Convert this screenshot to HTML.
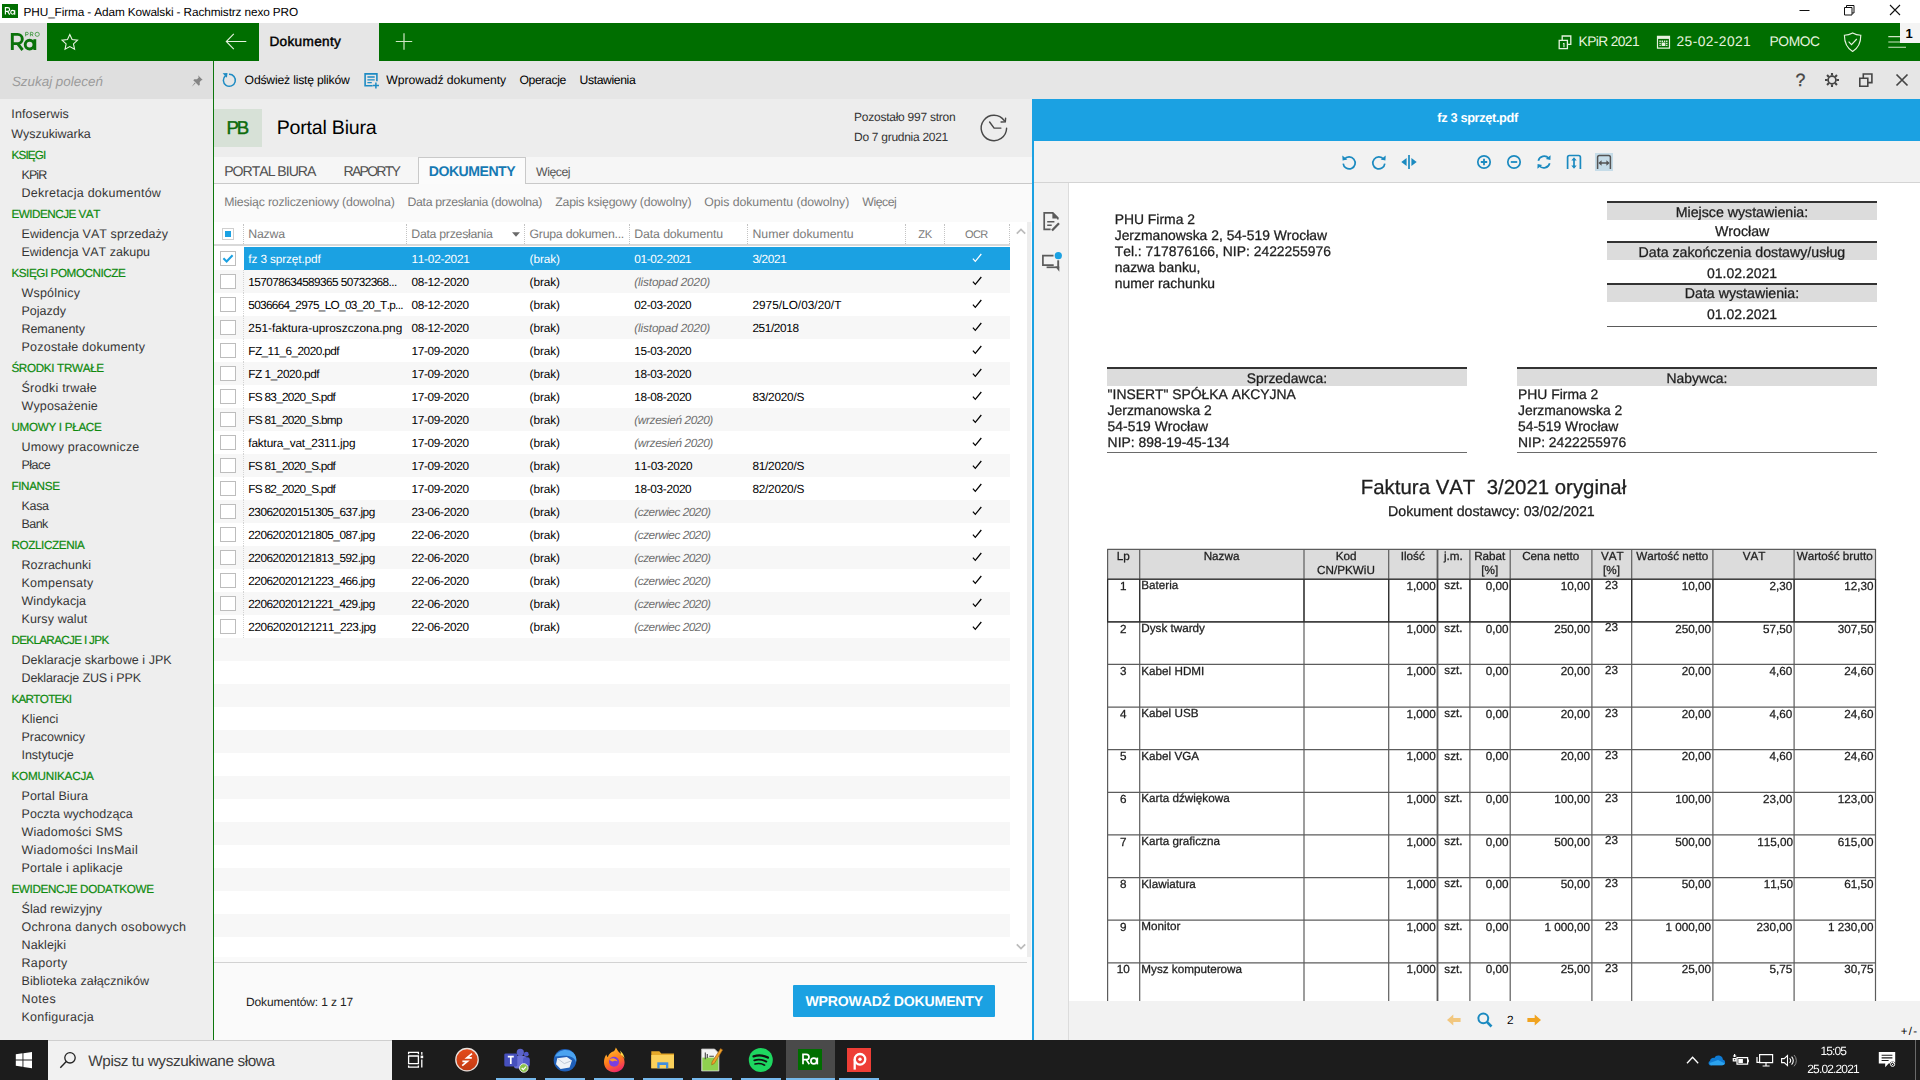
<!DOCTYPE html>
<html lang="pl">
<head>
<meta charset="utf-8">
<title>PHU_Firma - Adam Kowalski - Rachmistrz nexo PRO</title>
<style>
*{box-sizing:border-box;margin:0;padding:0}
html,body{width:1920px;height:1080px;overflow:hidden;background:#fff}
body{font-family:"Liberation Sans",sans-serif;font-size:12px;color:#000;position:relative;text-rendering:geometricPrecision}
.abs{position:absolute}
.t{position:absolute;white-space:pre;line-height:1;font-kerning:none}
svg{display:block}
</style>
</head>
<body>
<!-- main panel -->
<div>
<div class="abs" style="left:214px;top:99px;width:818px;height:941px;background:#fafafa;"></div>
<div class="abs" style="left:214px;top:99px;width:818px;height:58px;background:#ededed;"></div>
<div class="abs" style="left:214px;top:109px;width:48px;height:38px;background:#d7e1d7;"></div>
<span class="t" style="left:226.60px;top:119px;font-size:18.6px;color:#0c6b0c;letter-spacing:-2.214px;-webkit-text-stroke:0.45px #0c6b0c;">PB</span>
<span class="t" style="left:276.70px;top:119px;font-size:19.6px;color:#000;letter-spacing:-0.219px;">Portal Biura</span>
<span class="t" style="left:854.00px;top:111px;font-size:12.0px;color:#333;letter-spacing:-0.243px;">Pozostało 997 stron</span>
<span class="t" style="left:854.00px;top:131px;font-size:12.0px;color:#333;letter-spacing:-0.278px;">Do 7 grudnia 2021</span>
<svg class="abs" style="left:978px;top:112px;" width="32" height="32" viewBox="0 0 32 32"><g fill="none" stroke="#484848" stroke-width="1.450" stroke-linecap="round"><path d="M28.600 16.300A12.700 12.700 0 1 1 26.300 8.700"/><path d="M27.600 6.300l-.3 3.400-4.200.3" stroke-linejoin="miter"/><path d="M11.600 10l4.500 6.100h6.800"/></g></svg>
<div class="abs" style="left:214px;top:157px;width:818px;height:27px;background:#f6f6f6;"></div>
<div class="abs" style="left:214px;top:183px;width:818px;height:1px;background:#c9c9c9;"></div>
<div class="abs" style="left:418px;top:157px;width:108px;height:27px;background:#fbfbfb;border:1px solid #c9c9c9;border-bottom:none"></div>
<span class="t" style="left:224.20px;top:164px;font-size:14.1px;color:#505050;letter-spacing:-1.018px;">PORTAL BIURA</span>
<span class="t" style="left:343.50px;top:164px;font-size:14.1px;color:#505050;letter-spacing:-1.768px;">RAPORTY</span>
<span class="t" style="left:428.80px;top:164px;font-size:14.1px;color:#1679b3;letter-spacing:-0.508px;font-weight:bold;">DOKUMENTY</span>
<span class="t" style="left:536.00px;top:166px;font-size:12.3px;color:#555;letter-spacing:-0.481px;">Więcej</span>
<span class="t" style="left:224.20px;top:196px;font-size:12.3px;color:#7a7a7a;letter-spacing:-0.169px;">Miesiąc rozliczeniowy (dowolna)</span>
<span class="t" style="left:407.50px;top:196px;font-size:12.3px;color:#7a7a7a;letter-spacing:-0.329px;">Data przesłania (dowolna)</span>
<span class="t" style="left:555.20px;top:196px;font-size:12.3px;color:#7a7a7a;letter-spacing:-0.188px;">Zapis księgowy (dowolny)</span>
<span class="t" style="left:704.30px;top:196px;font-size:12.3px;color:#7a7a7a;letter-spacing:-0.057px;">Opis dokumentu (dowolny)</span>
<span class="t" style="left:862.30px;top:196px;font-size:12.3px;color:#7a7a7a;letter-spacing:-0.481px;">Więcej</span>
<div class="abs" style="left:214px;top:222px;width:813px;height:735px;background:#ffffff;"></div>
<div class="abs" style="left:1027px;top:222px;width:4px;height:735px;background:#ededed;"></div>
<div class="abs" style="left:214px;top:244px;width:796px;height:2px;background:#d9d9d9;"></div>
<div class="abs" style="left:222px;top:228px;width:12px;height:12px;background:#fff;border:1px solid #d0d0d0"></div>
<div class="abs" style="left:225px;top:231px;width:6px;height:6px;background:#1ba1e2;"></div>
<div class="abs" style="left:243px;top:224px;width:0;height:20px;border-left:1px dotted #c4c4c4"></div>
<div class="abs" style="left:406px;top:224px;width:0;height:20px;border-left:1px dotted #c4c4c4"></div>
<div class="abs" style="left:524px;top:224px;width:0;height:20px;border-left:1px dotted #c4c4c4"></div>
<div class="abs" style="left:628.5px;top:224px;width:0;height:20px;border-left:1px dotted #c4c4c4"></div>
<div class="abs" style="left:747px;top:224px;width:0;height:20px;border-left:1px dotted #c4c4c4"></div>
<div class="abs" style="left:905px;top:224px;width:0;height:20px;border-left:1px dotted #c4c4c4"></div>
<div class="abs" style="left:944px;top:224px;width:0;height:20px;border-left:1px dotted #c4c4c4"></div>
<div class="abs" style="left:1009px;top:224px;width:0;height:20px;border-left:1px dotted #c4c4c4"></div>
<span class="t" style="left:248.30px;top:228px;font-size:12.3px;color:#7a7a7a;letter-spacing:-0.229px;">Nazwa</span>
<span class="t" style="left:411.30px;top:228px;font-size:12.3px;color:#7a7a7a;letter-spacing:-0.276px;">Data przesłania</span>
<svg class="abs" style="left:511px;top:231px;" width="10" height="7" viewBox="0 0 10 7"><path d="M1 1.300h8L5 5.800z" fill="#6a6a6a"/></svg>
<span class="t" style="left:529.50px;top:228px;font-size:12.3px;color:#7a7a7a;letter-spacing:-0.244px;">Grupa dokumen...</span>
<span class="t" style="left:634.30px;top:228px;font-size:12.3px;color:#7a7a7a;letter-spacing:-0.112px;">Data dokumentu</span>
<span class="t" style="left:752.40px;top:228px;font-size:12.3px;color:#7a7a7a;letter-spacing:0.008px;">Numer dokumentu</span>
<span class="t" style="left:918.20px;top:230px;font-size:11.2px;color:#7a7a7a;letter-spacing:-0.312px;">ZK</span>
<span class="t" style="left:965.00px;top:230px;font-size:11.0px;color:#7a7a7a;letter-spacing:-0.572px;">OCR</span>
<svg class="abs" style="left:1015px;top:227px;" width="12" height="8" viewBox="0 0 12 8"><path d="M1.800 6.600L6 2.400l4.200 4.200" fill="none" stroke="#bcbcbc" stroke-width="1.800"/></svg>
<svg class="abs" style="left:1015px;top:943px;" width="12" height="8" viewBox="0 0 12 8"><path d="M1.800 1.400L6 5.600l4.200-4.200" fill="none" stroke="#bcbcbc" stroke-width="1.800"/></svg>
<div class="abs" style="left:244px;top:247px;width:766px;height:23px;background:#1ba1e2;"></div>
<div class="abs" style="left:220px;top:251px;width:16px;height:15px;background:#fff;border:1px solid #bdbdbd"></div>
<svg class="abs" style="left:220px;top:251px;" width="16" height="15" viewBox="0 0 16 15"><path d="M3.400 7.300l3.200 3.100 6-6.200" fill="none" stroke="#1ba1e2" stroke-width="2.100"/></svg>
<span class="t" style="left:248.30px;top:254px;font-size:11.8px;color:#fff;letter-spacing:-0.115px;">fz 3 sprzęt.pdf</span>
<span class="t" style="left:411.40px;top:254px;font-size:11.8px;color:#fff;letter-spacing:-0.210px;">11-02-2021</span>
<span class="t" style="left:529.60px;top:254px;font-size:11.8px;color:#fff;letter-spacing:-0.103px;">(brak)</span>
<span class="t" style="left:634.30px;top:254px;font-size:11.8px;color:#fff;letter-spacing:-0.329px;">01-02-2021</span>
<span class="t" style="left:752.40px;top:254px;font-size:11.8px;color:#fff;letter-spacing:-0.338px;">3/2021</span>
<svg class="abs" style="left:971px;top:252px;" width="12" height="12" viewBox="0 0 12 12"><path d="M1.900 6.600l2.400 2.700L10.300 2" fill="none" stroke="#fff" stroke-width="1.250"/></svg>
<div class="abs" style="left:214px;top:270px;width:796px;height:23px;background:#f7f7f7;"></div>
<div class="abs" style="left:220px;top:274px;width:16px;height:15px;background:#fff;border:1px solid #bdbdbd"></div>
<div class="abs" style="left:243px;top:270px;width:0;height:23px;border-left:1px dotted #d4d4d4"></div>
<span class="t" style="left:248.30px;top:277px;font-size:11.8px;color:#000;letter-spacing:-0.579px;">157078634589365 50732368...</span>
<span class="t" style="left:411.40px;top:277px;font-size:11.8px;color:#000;letter-spacing:-0.307px;">08-12-2020</span>
<span class="t" style="left:529.60px;top:277px;font-size:11.8px;color:#000;letter-spacing:-0.103px;">(brak)</span>
<span class="t" style="left:634.30px;top:277px;font-size:11.8px;color:#6e6e6e;letter-spacing:-0.147px;font-style:italic;">(listopad 2020)</span>
<svg class="abs" style="left:971px;top:275px;" width="12" height="12" viewBox="0 0 12 12"><path d="M1.900 6.600l2.400 2.700L10.300 2" fill="none" stroke="#000" stroke-width="1.250"/></svg>
<div class="abs" style="left:220px;top:297px;width:16px;height:15px;background:#fff;border:1px solid #bdbdbd"></div>
<div class="abs" style="left:243px;top:293px;width:0;height:23px;border-left:1px dotted #d4d4d4"></div>
<span class="t" style="left:248.30px;top:300px;font-size:11.8px;color:#000;letter-spacing:-0.688px;">5036664_2975_LO_03_20_T.p...</span>
<span class="t" style="left:411.40px;top:300px;font-size:11.8px;color:#000;letter-spacing:-0.307px;">08-12-2020</span>
<span class="t" style="left:529.60px;top:300px;font-size:11.8px;color:#000;letter-spacing:-0.103px;">(brak)</span>
<span class="t" style="left:634.30px;top:300px;font-size:11.8px;color:#000;letter-spacing:-0.329px;">02-03-2020</span>
<span class="t" style="left:752.40px;top:300px;font-size:11.8px;color:#000;letter-spacing:0.031px;">2975/LO/03/20/T</span>
<svg class="abs" style="left:971px;top:298px;" width="12" height="12" viewBox="0 0 12 12"><path d="M1.900 6.600l2.400 2.700L10.300 2" fill="none" stroke="#000" stroke-width="1.250"/></svg>
<div class="abs" style="left:214px;top:316px;width:796px;height:23px;background:#f7f7f7;"></div>
<div class="abs" style="left:220px;top:320px;width:16px;height:15px;background:#fff;border:1px solid #bdbdbd"></div>
<div class="abs" style="left:243px;top:316px;width:0;height:23px;border-left:1px dotted #d4d4d4"></div>
<span class="t" style="left:248.30px;top:323px;font-size:11.8px;color:#000;letter-spacing:0.019px;">251-faktura-uproszczona.png</span>
<span class="t" style="left:411.40px;top:323px;font-size:11.8px;color:#000;letter-spacing:-0.307px;">08-12-2020</span>
<span class="t" style="left:529.60px;top:323px;font-size:11.8px;color:#000;letter-spacing:-0.103px;">(brak)</span>
<span class="t" style="left:634.30px;top:323px;font-size:11.8px;color:#6e6e6e;letter-spacing:-0.147px;font-style:italic;">(listopad 2020)</span>
<span class="t" style="left:752.40px;top:323px;font-size:11.8px;color:#000;letter-spacing:-0.374px;">251/2018</span>
<svg class="abs" style="left:971px;top:321px;" width="12" height="12" viewBox="0 0 12 12"><path d="M1.900 6.600l2.400 2.700L10.300 2" fill="none" stroke="#000" stroke-width="1.250"/></svg>
<div class="abs" style="left:220px;top:343px;width:16px;height:15px;background:#fff;border:1px solid #bdbdbd"></div>
<div class="abs" style="left:243px;top:339px;width:0;height:23px;border-left:1px dotted #d4d4d4"></div>
<span class="t" style="left:248.30px;top:346px;font-size:11.8px;color:#000;letter-spacing:-0.557px;">FZ_11_6_2020.pdf</span>
<span class="t" style="left:411.40px;top:346px;font-size:11.8px;color:#000;letter-spacing:-0.307px;">17-09-2020</span>
<span class="t" style="left:529.60px;top:346px;font-size:11.8px;color:#000;letter-spacing:-0.103px;">(brak)</span>
<span class="t" style="left:634.30px;top:346px;font-size:11.8px;color:#000;letter-spacing:-0.329px;">15-03-2020</span>
<svg class="abs" style="left:971px;top:344px;" width="12" height="12" viewBox="0 0 12 12"><path d="M1.900 6.600l2.400 2.700L10.300 2" fill="none" stroke="#000" stroke-width="1.250"/></svg>
<div class="abs" style="left:214px;top:362px;width:796px;height:23px;background:#f7f7f7;"></div>
<div class="abs" style="left:220px;top:366px;width:16px;height:15px;background:#fff;border:1px solid #bdbdbd"></div>
<div class="abs" style="left:243px;top:362px;width:0;height:23px;border-left:1px dotted #d4d4d4"></div>
<span class="t" style="left:248.30px;top:369px;font-size:11.8px;color:#000;letter-spacing:-0.454px;">FZ 1_2020.pdf</span>
<span class="t" style="left:411.40px;top:369px;font-size:11.8px;color:#000;letter-spacing:-0.307px;">17-09-2020</span>
<span class="t" style="left:529.60px;top:369px;font-size:11.8px;color:#000;letter-spacing:-0.103px;">(brak)</span>
<span class="t" style="left:634.30px;top:369px;font-size:11.8px;color:#000;letter-spacing:-0.329px;">18-03-2020</span>
<svg class="abs" style="left:971px;top:367px;" width="12" height="12" viewBox="0 0 12 12"><path d="M1.900 6.600l2.400 2.700L10.300 2" fill="none" stroke="#000" stroke-width="1.250"/></svg>
<div class="abs" style="left:220px;top:389px;width:16px;height:15px;background:#fff;border:1px solid #bdbdbd"></div>
<div class="abs" style="left:243px;top:385px;width:0;height:23px;border-left:1px dotted #d4d4d4"></div>
<span class="t" style="left:248.30px;top:392px;font-size:11.8px;color:#000;letter-spacing:-0.728px;">FS 83_2020_S.pdf</span>
<span class="t" style="left:411.40px;top:392px;font-size:11.8px;color:#000;letter-spacing:-0.307px;">17-09-2020</span>
<span class="t" style="left:529.60px;top:392px;font-size:11.8px;color:#000;letter-spacing:-0.103px;">(brak)</span>
<span class="t" style="left:634.30px;top:392px;font-size:11.8px;color:#000;letter-spacing:-0.329px;">18-08-2020</span>
<span class="t" style="left:752.40px;top:392px;font-size:11.8px;color:#000;letter-spacing:-0.226px;">83/2020/S</span>
<svg class="abs" style="left:971px;top:390px;" width="12" height="12" viewBox="0 0 12 12"><path d="M1.900 6.600l2.400 2.700L10.300 2" fill="none" stroke="#000" stroke-width="1.250"/></svg>
<div class="abs" style="left:214px;top:408px;width:796px;height:23px;background:#f7f7f7;"></div>
<div class="abs" style="left:220px;top:412px;width:16px;height:15px;background:#fff;border:1px solid #bdbdbd"></div>
<div class="abs" style="left:243px;top:408px;width:0;height:23px;border-left:1px dotted #d4d4d4"></div>
<span class="t" style="left:248.30px;top:415px;font-size:11.8px;color:#000;letter-spacing:-0.718px;">FS 81_2020_S.bmp</span>
<span class="t" style="left:411.40px;top:415px;font-size:11.8px;color:#000;letter-spacing:-0.307px;">17-09-2020</span>
<span class="t" style="left:529.60px;top:415px;font-size:11.8px;color:#000;letter-spacing:-0.103px;">(brak)</span>
<span class="t" style="left:634.30px;top:415px;font-size:11.8px;color:#6e6e6e;letter-spacing:-0.354px;font-style:italic;">(wrzesień 2020)</span>
<svg class="abs" style="left:971px;top:413px;" width="12" height="12" viewBox="0 0 12 12"><path d="M1.900 6.600l2.400 2.700L10.300 2" fill="none" stroke="#000" stroke-width="1.250"/></svg>
<div class="abs" style="left:220px;top:435px;width:16px;height:15px;background:#fff;border:1px solid #bdbdbd"></div>
<div class="abs" style="left:243px;top:431px;width:0;height:23px;border-left:1px dotted #d4d4d4"></div>
<span class="t" style="left:248.30px;top:438px;font-size:11.8px;color:#000;letter-spacing:-0.160px;">faktura_vat_2311.jpg</span>
<span class="t" style="left:411.40px;top:438px;font-size:11.8px;color:#000;letter-spacing:-0.307px;">17-09-2020</span>
<span class="t" style="left:529.60px;top:438px;font-size:11.8px;color:#000;letter-spacing:-0.103px;">(brak)</span>
<span class="t" style="left:634.30px;top:438px;font-size:11.8px;color:#6e6e6e;letter-spacing:-0.354px;font-style:italic;">(wrzesień 2020)</span>
<svg class="abs" style="left:971px;top:436px;" width="12" height="12" viewBox="0 0 12 12"><path d="M1.900 6.600l2.400 2.700L10.300 2" fill="none" stroke="#000" stroke-width="1.250"/></svg>
<div class="abs" style="left:214px;top:454px;width:796px;height:23px;background:#f7f7f7;"></div>
<div class="abs" style="left:220px;top:458px;width:16px;height:15px;background:#fff;border:1px solid #bdbdbd"></div>
<div class="abs" style="left:243px;top:454px;width:0;height:23px;border-left:1px dotted #d4d4d4"></div>
<span class="t" style="left:248.30px;top:461px;font-size:11.8px;color:#000;letter-spacing:-0.728px;">FS 81_2020_S.pdf</span>
<span class="t" style="left:411.40px;top:461px;font-size:11.8px;color:#000;letter-spacing:-0.307px;">17-09-2020</span>
<span class="t" style="left:529.60px;top:461px;font-size:11.8px;color:#000;letter-spacing:-0.103px;">(brak)</span>
<span class="t" style="left:634.30px;top:461px;font-size:11.8px;color:#000;letter-spacing:-0.232px;">11-03-2020</span>
<span class="t" style="left:752.40px;top:461px;font-size:11.8px;color:#000;letter-spacing:-0.226px;">81/2020/S</span>
<svg class="abs" style="left:971px;top:459px;" width="12" height="12" viewBox="0 0 12 12"><path d="M1.900 6.600l2.400 2.700L10.300 2" fill="none" stroke="#000" stroke-width="1.250"/></svg>
<div class="abs" style="left:220px;top:481px;width:16px;height:15px;background:#fff;border:1px solid #bdbdbd"></div>
<div class="abs" style="left:243px;top:477px;width:0;height:23px;border-left:1px dotted #d4d4d4"></div>
<span class="t" style="left:248.30px;top:484px;font-size:11.8px;color:#000;letter-spacing:-0.728px;">FS 82_2020_S.pdf</span>
<span class="t" style="left:411.40px;top:484px;font-size:11.8px;color:#000;letter-spacing:-0.307px;">17-09-2020</span>
<span class="t" style="left:529.60px;top:484px;font-size:11.8px;color:#000;letter-spacing:-0.103px;">(brak)</span>
<span class="t" style="left:634.30px;top:484px;font-size:11.8px;color:#000;letter-spacing:-0.329px;">18-03-2020</span>
<span class="t" style="left:752.40px;top:484px;font-size:11.8px;color:#000;letter-spacing:-0.226px;">82/2020/S</span>
<svg class="abs" style="left:971px;top:482px;" width="12" height="12" viewBox="0 0 12 12"><path d="M1.900 6.600l2.400 2.700L10.300 2" fill="none" stroke="#000" stroke-width="1.250"/></svg>
<div class="abs" style="left:214px;top:500px;width:796px;height:23px;background:#f7f7f7;"></div>
<div class="abs" style="left:220px;top:504px;width:16px;height:15px;background:#fff;border:1px solid #bdbdbd"></div>
<div class="abs" style="left:243px;top:500px;width:0;height:23px;border-left:1px dotted #d4d4d4"></div>
<span class="t" style="left:248.30px;top:507px;font-size:11.8px;color:#000;letter-spacing:-0.484px;">23062020151305_637.jpg</span>
<span class="t" style="left:411.40px;top:507px;font-size:11.8px;color:#000;letter-spacing:-0.307px;">23-06-2020</span>
<span class="t" style="left:529.60px;top:507px;font-size:11.8px;color:#000;letter-spacing:-0.103px;">(brak)</span>
<span class="t" style="left:634.30px;top:507px;font-size:11.8px;color:#6e6e6e;letter-spacing:-0.471px;font-style:italic;">(czerwiec 2020)</span>
<svg class="abs" style="left:971px;top:505px;" width="12" height="12" viewBox="0 0 12 12"><path d="M1.900 6.600l2.400 2.700L10.300 2" fill="none" stroke="#000" stroke-width="1.250"/></svg>
<div class="abs" style="left:220px;top:527px;width:16px;height:15px;background:#fff;border:1px solid #bdbdbd"></div>
<div class="abs" style="left:243px;top:523px;width:0;height:23px;border-left:1px dotted #d4d4d4"></div>
<span class="t" style="left:248.30px;top:530px;font-size:11.8px;color:#000;letter-spacing:-0.484px;">22062020121805_087.jpg</span>
<span class="t" style="left:411.40px;top:530px;font-size:11.8px;color:#000;letter-spacing:-0.307px;">22-06-2020</span>
<span class="t" style="left:529.60px;top:530px;font-size:11.8px;color:#000;letter-spacing:-0.103px;">(brak)</span>
<span class="t" style="left:634.30px;top:530px;font-size:11.8px;color:#6e6e6e;letter-spacing:-0.471px;font-style:italic;">(czerwiec 2020)</span>
<svg class="abs" style="left:971px;top:528px;" width="12" height="12" viewBox="0 0 12 12"><path d="M1.900 6.600l2.400 2.700L10.300 2" fill="none" stroke="#000" stroke-width="1.250"/></svg>
<div class="abs" style="left:214px;top:546px;width:796px;height:23px;background:#f7f7f7;"></div>
<div class="abs" style="left:220px;top:550px;width:16px;height:15px;background:#fff;border:1px solid #bdbdbd"></div>
<div class="abs" style="left:243px;top:546px;width:0;height:23px;border-left:1px dotted #d4d4d4"></div>
<span class="t" style="left:248.30px;top:553px;font-size:11.8px;color:#000;letter-spacing:-0.484px;">22062020121813_592.jpg</span>
<span class="t" style="left:411.40px;top:553px;font-size:11.8px;color:#000;letter-spacing:-0.307px;">22-06-2020</span>
<span class="t" style="left:529.60px;top:553px;font-size:11.8px;color:#000;letter-spacing:-0.103px;">(brak)</span>
<span class="t" style="left:634.30px;top:553px;font-size:11.8px;color:#6e6e6e;letter-spacing:-0.471px;font-style:italic;">(czerwiec 2020)</span>
<svg class="abs" style="left:971px;top:551px;" width="12" height="12" viewBox="0 0 12 12"><path d="M1.900 6.600l2.400 2.700L10.300 2" fill="none" stroke="#000" stroke-width="1.250"/></svg>
<div class="abs" style="left:220px;top:573px;width:16px;height:15px;background:#fff;border:1px solid #bdbdbd"></div>
<div class="abs" style="left:243px;top:569px;width:0;height:23px;border-left:1px dotted #d4d4d4"></div>
<span class="t" style="left:248.30px;top:576px;font-size:11.8px;color:#000;letter-spacing:-0.484px;">22062020121223_466.jpg</span>
<span class="t" style="left:411.40px;top:576px;font-size:11.8px;color:#000;letter-spacing:-0.307px;">22-06-2020</span>
<span class="t" style="left:529.60px;top:576px;font-size:11.8px;color:#000;letter-spacing:-0.103px;">(brak)</span>
<span class="t" style="left:634.30px;top:576px;font-size:11.8px;color:#6e6e6e;letter-spacing:-0.471px;font-style:italic;">(czerwiec 2020)</span>
<svg class="abs" style="left:971px;top:574px;" width="12" height="12" viewBox="0 0 12 12"><path d="M1.900 6.600l2.400 2.700L10.300 2" fill="none" stroke="#000" stroke-width="1.250"/></svg>
<div class="abs" style="left:214px;top:592px;width:796px;height:23px;background:#f7f7f7;"></div>
<div class="abs" style="left:220px;top:596px;width:16px;height:15px;background:#fff;border:1px solid #bdbdbd"></div>
<div class="abs" style="left:243px;top:592px;width:0;height:23px;border-left:1px dotted #d4d4d4"></div>
<span class="t" style="left:248.30px;top:599px;font-size:11.8px;color:#000;letter-spacing:-0.484px;">22062020121221_429.jpg</span>
<span class="t" style="left:411.40px;top:599px;font-size:11.8px;color:#000;letter-spacing:-0.307px;">22-06-2020</span>
<span class="t" style="left:529.60px;top:599px;font-size:11.8px;color:#000;letter-spacing:-0.103px;">(brak)</span>
<span class="t" style="left:634.30px;top:599px;font-size:11.8px;color:#6e6e6e;letter-spacing:-0.471px;font-style:italic;">(czerwiec 2020)</span>
<svg class="abs" style="left:971px;top:597px;" width="12" height="12" viewBox="0 0 12 12"><path d="M1.900 6.600l2.400 2.700L10.300 2" fill="none" stroke="#000" stroke-width="1.250"/></svg>
<div class="abs" style="left:220px;top:619px;width:16px;height:15px;background:#fff;border:1px solid #bdbdbd"></div>
<div class="abs" style="left:243px;top:615px;width:0;height:23px;border-left:1px dotted #d4d4d4"></div>
<span class="t" style="left:248.30px;top:622px;font-size:11.8px;color:#000;letter-spacing:-0.442px;">22062020121211_223.jpg</span>
<span class="t" style="left:411.40px;top:622px;font-size:11.8px;color:#000;letter-spacing:-0.307px;">22-06-2020</span>
<span class="t" style="left:529.60px;top:622px;font-size:11.8px;color:#000;letter-spacing:-0.103px;">(brak)</span>
<span class="t" style="left:634.30px;top:622px;font-size:11.8px;color:#6e6e6e;letter-spacing:-0.471px;font-style:italic;">(czerwiec 2020)</span>
<svg class="abs" style="left:971px;top:620px;" width="12" height="12" viewBox="0 0 12 12"><path d="M1.900 6.600l2.400 2.700L10.300 2" fill="none" stroke="#000" stroke-width="1.250"/></svg>
<div class="abs" style="left:214px;top:638px;width:796px;height:23px;background:#f7f7f7;"></div>
<div class="abs" style="left:214px;top:684px;width:796px;height:23px;background:#f7f7f7;"></div>
<div class="abs" style="left:214px;top:730px;width:796px;height:23px;background:#f7f7f7;"></div>
<div class="abs" style="left:214px;top:776px;width:796px;height:23px;background:#f7f7f7;"></div>
<div class="abs" style="left:214px;top:822px;width:796px;height:23px;background:#f7f7f7;"></div>
<div class="abs" style="left:214px;top:868px;width:796px;height:23px;background:#f7f7f7;"></div>
<div class="abs" style="left:214px;top:914px;width:796px;height:23px;background:#f7f7f7;"></div>
<div class="abs" style="left:214px;top:962px;width:813px;height:1px;background:#d2d2d2;"></div>
<span class="t" style="left:246.00px;top:996px;font-size:12.0px;color:#222;letter-spacing:-0.123px;">Dokumentów: 1 z 17</span>
<div class="abs" style="left:793px;top:985px;width:202px;height:32px;background:#1ba1e2;border-radius:1px"></div>
<span class="t" style="left:805.50px;top:994px;font-size:14.1px;color:#fff;letter-spacing:-0.186px;font-weight:bold;">WPROWADŹ DOKUMENTY</span>
</div>
<!-- right pane / pdf preview -->
<div>
<div class="abs" style="left:1034px;top:99px;width:886px;height:941px;background:#f2f2f2;"></div>
<div class="abs" style="left:1032px;top:99px;width:888px;height:42px;background:#1ba1e2;"></div>
<span class="t" style="left:1437.30px;top:112px;font-size:12.8px;color:#fff;letter-spacing:-0.361px;font-weight:bold;">fz 3 sprzęt.pdf</span>
<div class="abs" style="left:1034px;top:182px;width:886px;height:1px;background:#d4d4d4;"></div>
<div class="abs" style="left:1068px;top:183px;width:1px;height:857px;background:#dcdcdc;"></div>
<div class="abs" style="left:1032px;top:99px;width:2px;height:941px;background:#1ba1e2;"></div>
<svg class="abs" style="left:1339.7px;top:153px;" width="18" height="18" viewBox="0 0 18 18"><path d="M4.300 6.400A6 6 0 1 1 3.200 10.600" fill="none" stroke="#1b8ac0" stroke-width="1.700"/><path d="M2.300 2.600l.3 5 4.700-1.200z" fill="#1b8ac0"/></svg>
<svg class="abs" style="left:1370px;top:153px;" width="18" height="18" viewBox="0 0 18 18"><path d="M13.700 6.400A6 6 0 1 0 14.800 10.600" fill="none" stroke="#1b8ac0" stroke-width="1.700"/><path d="M15.700 2.600l-.3 5-4.700-1.200z" fill="#1b8ac0"/></svg>
<svg class="abs" style="left:1400px;top:153px;" width="18" height="18" viewBox="0 0 18 18"><path d="M9 2v14" fill="none" stroke="#1b8ac0" stroke-width="1.700"/><path d="M6.600 5v8L1.300 9zM11.400 5v8l5.300-4z" fill="#1b8ac0"/></svg>
<svg class="abs" style="left:1475px;top:153px;" width="18" height="18" viewBox="0 0 18 18"><circle cx="9" cy="9" r="6.200" fill="none" stroke="#1b8ac0" stroke-width="1.700"/><path d="M5.800 9h6.400M9 5.800v6.400" fill="none" stroke="#1b8ac0" stroke-width="1.800"/></svg>
<svg class="abs" style="left:1505px;top:153px;" width="18" height="18" viewBox="0 0 18 18"><circle cx="9" cy="9" r="6.200" fill="none" stroke="#1b8ac0" stroke-width="1.700"/><path d="M5.800 9h6.400" fill="none" stroke="#1b8ac0" stroke-width="1.800"/></svg>
<svg class="abs" style="left:1535px;top:153px;" width="18" height="18" viewBox="0 0 18 18"><path d="M3.300 7.800A6 6 0 0 1 13.700 5.300M14.700 10.200A6 6 0 0 1 4.300 12.700" fill="none" stroke="#1b8ac0" stroke-width="1.700"/><path d="M15.600 2.300l-.2 4.800-4.600-1.100zM2.400 15.700l.2-4.800 4.600 1.100z" fill="#1b8ac0"/></svg>
<svg class="abs" style="left:1565px;top:153px;" width="18" height="18" viewBox="0 0 18 18"><path d="M2.600 16V4.300q0-1.800 1.800-1.800h9.200q1.800 0 1.800 1.800V16" fill="none" stroke="#1b8ac0" stroke-width="1.700"/><path d="M9 6.500v7" fill="none" stroke="#1b8ac0" stroke-width="1.700"/><path d="M6.300 7.600L9 4.300l2.700 3.300zM6.300 12.400L9 15.700l2.700-3.300z" fill="#1b8ac0"/></svg>
<div class="abs" style="left:1595px;top:153px;width:18px;height:18px;background:#c6dce8;"></div>
<svg class="abs" style="left:1595px;top:153px;" width="18" height="18" viewBox="0 0 18 18"><path d="M2.600 16V4.300q0-1.800 1.800-1.800h9.200q1.800 0 1.800 1.800V16" fill="none" stroke="#555" stroke-width="1.500"/><path d="M5.500 10h7" fill="none" stroke="#555" stroke-width="1.500"/><path d="M6.600 7.300L3.300 10l3.300 2.700zM11.400 7.300l3.300 2.700-3.300 2.700z" fill="#555"/></svg>
<svg class="abs" style="left:1042px;top:210px;" width="20" height="22" viewBox="0 0 20 22"><g fill="none" stroke="#5b5b5b"><path d="M8.600 19.400H2.200V2.900h8.600l5 5v1.700" stroke-width="1.700"/><path d="M5.200 11.700h7.200M5.200 15.300h4.500" stroke-width="1.600"/><path d="M17 13.200l-7 7.300" stroke-width="2.300"/></g><path d="M10.400 2.600l5.900 5.900h-5.900z" fill="#5b5b5b"/></svg>
<svg class="abs" style="left:1040px;top:250px;" width="24" height="24" viewBox="0 0 24 24"><g fill="none" stroke="#5b5b5b" stroke-width="1.700"><path d="M13.500 5.600H2.900v9.500h10.800"/><path d="M6.600 17.300h11.200"/><path d="M18.200 10.300v7.800" stroke-width="1.900"/></g><path d="M15.300 16.500h4v5.300z" fill="#5b5b5b"/><circle cx="18.300" cy="5.700" r="3.600" fill="#1ba1e2"/></svg>
<div class="abs" style="left:1069px;top:183px;width:851px;height:818px;background:#ffffff;"></div>
<div class="abs" style="left:0;top:0;width:1920px;height:1001px;overflow:hidden;filter:blur(0.4px);-webkit-text-stroke:0.28px #1e1e1e"><span class="t" style="left:1114.70px;top:213px;font-size:13.9px;color:#1e1e1e;">PHU Firma 2</span>
<span class="t" style="left:1114.70px;top:229px;font-size:13.9px;color:#1e1e1e;">Jerzmanowska 2, 54-519 Wrocław</span>
<span class="t" style="left:1114.70px;top:245px;font-size:13.9px;color:#1e1e1e;">Tel.: 717876166, NIP: 2422255976</span>
<span class="t" style="left:1114.70px;top:261px;font-size:13.9px;color:#1e1e1e;">nazwa banku,</span>
<span class="t" style="left:1114.70px;top:277px;font-size:13.9px;color:#1e1e1e;">numer rachunku</span>
<div class="abs" style="left:1607px;top:201px;width:270px;height:2px;background:#333;"></div>
<div class="abs" style="left:1607px;top:203px;width:270px;height:17px;background:#dcdcdc;"></div>
<span class="t" style="left:1675.71px;top:206px;font-size:14.2px;color:#1e1e1e;">Miejsce wystawienia:</span>
<span class="t" style="left:1714.91px;top:225px;font-size:14.2px;color:#1e1e1e;">Wrocław</span>
<div class="abs" style="left:1607px;top:241px;width:270px;height:2px;background:#333;"></div>
<div class="abs" style="left:1607px;top:243px;width:270px;height:17px;background:#dcdcdc;"></div>
<span class="t" style="left:1638.59px;top:246px;font-size:14.2px;color:#1e1e1e;">Data zakończenia dostawy/usług</span>
<span class="t" style="left:1706.96px;top:266px;font-size:14.0px;color:#1e1e1e;">01.02.2021</span>
<div class="abs" style="left:1607px;top:283px;width:270px;height:2px;background:#333;"></div>
<div class="abs" style="left:1607px;top:285px;width:270px;height:17px;background:#dcdcdc;"></div>
<span class="t" style="left:1684.78px;top:287px;font-size:14.2px;color:#1e1e1e;">Data wystawienia:</span>
<span class="t" style="left:1706.96px;top:307px;font-size:14.0px;color:#1e1e1e;">01.02.2021</span>
<div class="abs" style="left:1607px;top:326px;width:270px;height:1px;background:#5a5a5a;"></div>
<div class="abs" style="left:1107px;top:367px;width:360px;height:2px;background:#333;"></div>
<div class="abs" style="left:1107px;top:369px;width:360px;height:17px;background:#dcdcdc;"></div>
<span class="t" style="left:1246.82px;top:372px;font-size:13.9px;color:#1e1e1e;">Sprzedawca:</span>
<span class="t" style="left:1107.60px;top:388px;font-size:13.9px;color:#1e1e1e;">"INSERT" SPÓŁKA AKCYJNA</span>
<span class="t" style="left:1107.60px;top:404px;font-size:13.9px;color:#1e1e1e;">Jerzmanowska 2</span>
<span class="t" style="left:1107.60px;top:420px;font-size:13.9px;color:#1e1e1e;">54-519 Wrocław</span>
<span class="t" style="left:1107.60px;top:436px;font-size:13.9px;color:#1e1e1e;">NIP: 898-19-45-134</span>
<div class="abs" style="left:1107px;top:452px;width:360px;height:1px;background:#6a6a6a;"></div>
<div class="abs" style="left:1517px;top:367px;width:360px;height:2px;background:#333;"></div>
<div class="abs" style="left:1517px;top:369px;width:360px;height:17px;background:#dcdcdc;"></div>
<span class="t" style="left:1666.48px;top:372px;font-size:13.9px;color:#1e1e1e;">Nabywca:</span>
<span class="t" style="left:1518.00px;top:388px;font-size:13.9px;color:#1e1e1e;">PHU Firma 2</span>
<span class="t" style="left:1518.00px;top:404px;font-size:13.9px;color:#1e1e1e;">Jerzmanowska 2</span>
<span class="t" style="left:1518.00px;top:420px;font-size:13.9px;color:#1e1e1e;">54-519 Wrocław</span>
<span class="t" style="left:1518.00px;top:436px;font-size:13.9px;color:#1e1e1e;">NIP: 2422255976</span>
<div class="abs" style="left:1517px;top:452px;width:360px;height:1px;background:#6a6a6a;"></div>
<span class="t" style="left:1360.80px;top:478px;font-size:20.4px;color:#1e1e1e;letter-spacing:0.007px;">Faktura VAT  3/2021 oryginał</span>
<span class="t" style="left:1388.09px;top:505px;font-size:14.2px;color:#1e1e1e;">Dokument dostawcy: 03/02/2021</span>
<div class="abs" style="left:1107px;top:549px;width:768.5px;height:30px;background:#dcdcdc;"></div>
<svg class="abs" style="left:1107px;top:549px;overflow:visible;" width="770" height="452" viewBox="0 0 770 452"><g fill="none" stroke="#5c5c5c" stroke-width="1.200"><path d="M0.3 0.40H768.7"/><path d="M0.3 30.20H768.7"/><path d="M0.3 72.82H768.7"/><path d="M0.3 115.44H768.7"/><path d="M0.3 158.06H768.7"/><path d="M0.3 200.68H768.7"/><path d="M0.3 243.30H768.7"/><path d="M0.3 285.92H768.7"/><path d="M0.3 328.54H768.7"/><path d="M0.3 371.16H768.7"/><path d="M0.3 413.78H768.7"/><path d="M0.60 -0.1V452.0"/><path d="M32.70 -0.1V452.0"/><path d="M197.00 -0.1V452.0"/><path d="M281.70 -0.1V452.0"/><path d="M330.50 -0.1V452.0" stroke-width="1.8"/><path d="M362.90 -0.1V452.0"/><path d="M403.20 -0.1V452.0"/><path d="M484.90 -0.1V452.0"/><path d="M524.70 -0.1V452.0"/><path d="M605.90 -0.1V452.0"/><path d="M687.10 -0.1V452.0"/><path d="M768.50 -0.1V452.0"/></g><g fill="none" stroke="#2c2c2c" stroke-width="1.150"><path d="M-0.0 30.20H769.1"/><path d="M-0.0 72.82H769.1"/><path d="M0.60 30.2V72.8"/><path d="M32.70 30.2V72.8"/><path d="M197.00 30.2V72.8"/><path d="M281.70 30.2V72.8"/><path d="M330.50 30.2V72.8"/><path d="M362.90 30.2V72.8"/><path d="M403.20 30.2V72.8"/><path d="M484.90 30.2V72.8"/><path d="M524.70 30.2V72.8"/><path d="M605.90 30.2V72.8"/><path d="M687.10 30.2V72.8"/><path d="M768.50 30.2V72.8"/></g></svg>
<span class="t" style="left:1116.84px;top:551px;font-size:11.7px;color:#1e1e1e;">Lp</span>
<span class="t" style="left:1203.67px;top:551px;font-size:11.7px;color:#1e1e1e;">Nazwa</span>
<span class="t" style="left:1335.64px;top:551px;font-size:11.7px;color:#1e1e1e;">Kod</span>
<span class="t" style="left:1317.12px;top:565px;font-size:11.7px;color:#1e1e1e;">CN/PKWiU</span>
<span class="t" style="left:1400.77px;top:551px;font-size:11.7px;color:#1e1e1e;">Ilość</span>
<span class="t" style="left:1443.98px;top:551px;font-size:11.7px;color:#1e1e1e;">j.m.</span>
<span class="t" style="left:1474.14px;top:551px;font-size:11.7px;color:#1e1e1e;">Rabat</span>
<span class="t" style="left:1481.30px;top:565px;font-size:11.7px;color:#1e1e1e;">[%]</span>
<span class="t" style="left:1522.13px;top:551px;font-size:11.7px;color:#1e1e1e;">Cena netto</span>
<span class="t" style="left:1600.99px;top:551px;font-size:11.7px;color:#1e1e1e;">VAT</span>
<span class="t" style="left:1603.05px;top:565px;font-size:11.7px;color:#1e1e1e;">[%]</span>
<span class="t" style="left:1636.13px;top:551px;font-size:11.7px;color:#1e1e1e;">Wartość netto</span>
<span class="t" style="left:1742.69px;top:551px;font-size:11.7px;color:#1e1e1e;">VAT</span>
<span class="t" style="left:1796.68px;top:551px;font-size:11.7px;color:#1e1e1e;">Wartość brutto</span>
<span class="t" style="left:1120.10px;top:581px;font-size:11.7px;color:#1e1e1e;">1</span>
<span class="t" style="left:1141.30px;top:580px;font-size:11.7px;color:#1e1e1e;">Bateria</span>
<span class="t" style="left:1406.62px;top:581px;font-size:11.7px;color:#1e1e1e;">1,000</span>
<span class="t" style="left:1444.30px;top:580px;font-size:11.7px;color:#1e1e1e;">szt.</span>
<span class="t" style="left:1485.83px;top:581px;font-size:11.7px;color:#1e1e1e;">0,00</span>
<span class="t" style="left:1560.72px;top:581px;font-size:11.7px;color:#1e1e1e;">10,00</span>
<span class="t" style="left:1604.99px;top:580px;font-size:11.7px;color:#1e1e1e;">23</span>
<span class="t" style="left:1681.72px;top:581px;font-size:11.7px;color:#1e1e1e;">10,00</span>
<span class="t" style="left:1769.43px;top:581px;font-size:11.7px;color:#1e1e1e;">2,30</span>
<span class="t" style="left:1844.32px;top:581px;font-size:11.7px;color:#1e1e1e;">12,30</span>
<span class="t" style="left:1120.10px;top:624px;font-size:11.7px;color:#1e1e1e;">2</span>
<span class="t" style="left:1141.30px;top:623px;font-size:11.7px;color:#1e1e1e;">Dysk twardy</span>
<span class="t" style="left:1406.62px;top:624px;font-size:11.7px;color:#1e1e1e;">1,000</span>
<span class="t" style="left:1444.30px;top:623px;font-size:11.7px;color:#1e1e1e;">szt.</span>
<span class="t" style="left:1485.83px;top:624px;font-size:11.7px;color:#1e1e1e;">0,00</span>
<span class="t" style="left:1554.21px;top:624px;font-size:11.7px;color:#1e1e1e;">250,00</span>
<span class="t" style="left:1604.99px;top:622px;font-size:11.7px;color:#1e1e1e;">23</span>
<span class="t" style="left:1675.21px;top:624px;font-size:11.7px;color:#1e1e1e;">250,00</span>
<span class="t" style="left:1762.92px;top:624px;font-size:11.7px;color:#1e1e1e;">57,50</span>
<span class="t" style="left:1837.81px;top:624px;font-size:11.7px;color:#1e1e1e;">307,50</span>
<span class="t" style="left:1120.10px;top:666px;font-size:11.7px;color:#1e1e1e;">3</span>
<span class="t" style="left:1141.30px;top:666px;font-size:11.7px;color:#1e1e1e;">Kabel HDMI</span>
<span class="t" style="left:1406.62px;top:666px;font-size:11.7px;color:#1e1e1e;">1,000</span>
<span class="t" style="left:1444.30px;top:665px;font-size:11.7px;color:#1e1e1e;">szt.</span>
<span class="t" style="left:1485.83px;top:666px;font-size:11.7px;color:#1e1e1e;">0,00</span>
<span class="t" style="left:1560.72px;top:666px;font-size:11.7px;color:#1e1e1e;">20,00</span>
<span class="t" style="left:1604.99px;top:665px;font-size:11.7px;color:#1e1e1e;">23</span>
<span class="t" style="left:1681.72px;top:666px;font-size:11.7px;color:#1e1e1e;">20,00</span>
<span class="t" style="left:1769.43px;top:666px;font-size:11.7px;color:#1e1e1e;">4,60</span>
<span class="t" style="left:1844.32px;top:666px;font-size:11.7px;color:#1e1e1e;">24,60</span>
<span class="t" style="left:1120.10px;top:709px;font-size:11.7px;color:#1e1e1e;">4</span>
<span class="t" style="left:1141.30px;top:708px;font-size:11.7px;color:#1e1e1e;">Kabel USB</span>
<span class="t" style="left:1406.62px;top:709px;font-size:11.7px;color:#1e1e1e;">1,000</span>
<span class="t" style="left:1444.30px;top:708px;font-size:11.7px;color:#1e1e1e;">szt.</span>
<span class="t" style="left:1485.83px;top:709px;font-size:11.7px;color:#1e1e1e;">0,00</span>
<span class="t" style="left:1560.72px;top:709px;font-size:11.7px;color:#1e1e1e;">20,00</span>
<span class="t" style="left:1604.99px;top:708px;font-size:11.7px;color:#1e1e1e;">23</span>
<span class="t" style="left:1681.72px;top:709px;font-size:11.7px;color:#1e1e1e;">20,00</span>
<span class="t" style="left:1769.43px;top:709px;font-size:11.7px;color:#1e1e1e;">4,60</span>
<span class="t" style="left:1844.32px;top:709px;font-size:11.7px;color:#1e1e1e;">24,60</span>
<span class="t" style="left:1120.10px;top:751px;font-size:11.7px;color:#1e1e1e;">5</span>
<span class="t" style="left:1141.30px;top:751px;font-size:11.7px;color:#1e1e1e;">Kabel VGA</span>
<span class="t" style="left:1406.62px;top:751px;font-size:11.7px;color:#1e1e1e;">1,000</span>
<span class="t" style="left:1444.30px;top:751px;font-size:11.7px;color:#1e1e1e;">szt.</span>
<span class="t" style="left:1485.83px;top:751px;font-size:11.7px;color:#1e1e1e;">0,00</span>
<span class="t" style="left:1560.72px;top:751px;font-size:11.7px;color:#1e1e1e;">20,00</span>
<span class="t" style="left:1604.99px;top:750px;font-size:11.7px;color:#1e1e1e;">23</span>
<span class="t" style="left:1681.72px;top:751px;font-size:11.7px;color:#1e1e1e;">20,00</span>
<span class="t" style="left:1769.43px;top:751px;font-size:11.7px;color:#1e1e1e;">4,60</span>
<span class="t" style="left:1844.32px;top:751px;font-size:11.7px;color:#1e1e1e;">24,60</span>
<span class="t" style="left:1120.10px;top:794px;font-size:11.7px;color:#1e1e1e;">6</span>
<span class="t" style="left:1141.30px;top:793px;font-size:11.7px;color:#1e1e1e;">Karta dźwiękowa</span>
<span class="t" style="left:1406.62px;top:794px;font-size:11.7px;color:#1e1e1e;">1,000</span>
<span class="t" style="left:1444.30px;top:793px;font-size:11.7px;color:#1e1e1e;">szt.</span>
<span class="t" style="left:1485.83px;top:794px;font-size:11.7px;color:#1e1e1e;">0,00</span>
<span class="t" style="left:1554.21px;top:794px;font-size:11.7px;color:#1e1e1e;">100,00</span>
<span class="t" style="left:1604.99px;top:793px;font-size:11.7px;color:#1e1e1e;">23</span>
<span class="t" style="left:1675.21px;top:794px;font-size:11.7px;color:#1e1e1e;">100,00</span>
<span class="t" style="left:1762.92px;top:794px;font-size:11.7px;color:#1e1e1e;">23,00</span>
<span class="t" style="left:1837.81px;top:794px;font-size:11.7px;color:#1e1e1e;">123,00</span>
<span class="t" style="left:1120.10px;top:837px;font-size:11.7px;color:#1e1e1e;">7</span>
<span class="t" style="left:1141.30px;top:836px;font-size:11.7px;color:#1e1e1e;">Karta graficzna</span>
<span class="t" style="left:1406.62px;top:837px;font-size:11.7px;color:#1e1e1e;">1,000</span>
<span class="t" style="left:1444.30px;top:836px;font-size:11.7px;color:#1e1e1e;">szt.</span>
<span class="t" style="left:1485.83px;top:837px;font-size:11.7px;color:#1e1e1e;">0,00</span>
<span class="t" style="left:1554.21px;top:837px;font-size:11.7px;color:#1e1e1e;">500,00</span>
<span class="t" style="left:1604.99px;top:835px;font-size:11.7px;color:#1e1e1e;">23</span>
<span class="t" style="left:1675.21px;top:837px;font-size:11.7px;color:#1e1e1e;">500,00</span>
<span class="t" style="left:1757.28px;top:837px;font-size:11.7px;color:#1e1e1e;">115,00</span>
<span class="t" style="left:1837.81px;top:837px;font-size:11.7px;color:#1e1e1e;">615,00</span>
<span class="t" style="left:1120.10px;top:879px;font-size:11.7px;color:#1e1e1e;">8</span>
<span class="t" style="left:1141.30px;top:879px;font-size:11.7px;color:#1e1e1e;">Klawiatura</span>
<span class="t" style="left:1406.62px;top:879px;font-size:11.7px;color:#1e1e1e;">1,000</span>
<span class="t" style="left:1444.30px;top:878px;font-size:11.7px;color:#1e1e1e;">szt.</span>
<span class="t" style="left:1485.83px;top:879px;font-size:11.7px;color:#1e1e1e;">0,00</span>
<span class="t" style="left:1560.72px;top:879px;font-size:11.7px;color:#1e1e1e;">50,00</span>
<span class="t" style="left:1604.99px;top:878px;font-size:11.7px;color:#1e1e1e;">23</span>
<span class="t" style="left:1681.72px;top:879px;font-size:11.7px;color:#1e1e1e;">50,00</span>
<span class="t" style="left:1763.79px;top:879px;font-size:11.7px;color:#1e1e1e;">11,50</span>
<span class="t" style="left:1844.32px;top:879px;font-size:11.7px;color:#1e1e1e;">61,50</span>
<span class="t" style="left:1120.10px;top:922px;font-size:11.7px;color:#1e1e1e;">9</span>
<span class="t" style="left:1141.30px;top:921px;font-size:11.7px;color:#1e1e1e;">Monitor</span>
<span class="t" style="left:1406.62px;top:922px;font-size:11.7px;color:#1e1e1e;">1,000</span>
<span class="t" style="left:1444.30px;top:921px;font-size:11.7px;color:#1e1e1e;">szt.</span>
<span class="t" style="left:1485.83px;top:922px;font-size:11.7px;color:#1e1e1e;">0,00</span>
<span class="t" style="left:1544.46px;top:922px;font-size:11.7px;color:#1e1e1e;">1 000,00</span>
<span class="t" style="left:1604.99px;top:921px;font-size:11.7px;color:#1e1e1e;">23</span>
<span class="t" style="left:1665.46px;top:922px;font-size:11.7px;color:#1e1e1e;">1 000,00</span>
<span class="t" style="left:1756.41px;top:922px;font-size:11.7px;color:#1e1e1e;">230,00</span>
<span class="t" style="left:1828.06px;top:922px;font-size:11.7px;color:#1e1e1e;">1 230,00</span>
<span class="t" style="left:1116.84px;top:964px;font-size:11.7px;color:#1e1e1e;">10</span>
<span class="t" style="left:1141.30px;top:964px;font-size:11.7px;color:#1e1e1e;">Mysz komputerowa</span>
<span class="t" style="left:1406.62px;top:964px;font-size:11.7px;color:#1e1e1e;">1,000</span>
<span class="t" style="left:1444.30px;top:964px;font-size:11.7px;color:#1e1e1e;">szt.</span>
<span class="t" style="left:1485.83px;top:964px;font-size:11.7px;color:#1e1e1e;">0,00</span>
<span class="t" style="left:1560.72px;top:964px;font-size:11.7px;color:#1e1e1e;">25,00</span>
<span class="t" style="left:1604.99px;top:963px;font-size:11.7px;color:#1e1e1e;">23</span>
<span class="t" style="left:1681.72px;top:964px;font-size:11.7px;color:#1e1e1e;">25,00</span>
<span class="t" style="left:1769.43px;top:964px;font-size:11.7px;color:#1e1e1e;">5,75</span>
<span class="t" style="left:1844.32px;top:964px;font-size:11.7px;color:#1e1e1e;">30,75</span></div>
<div class="abs" style="left:1069px;top:1001px;width:851px;height:39px;background:#f2f2f2;"></div>
<svg class="abs" style="left:1446px;top:1013px;" width="16" height="14" viewBox="0 0 16 14"><path d="M14.600 5.100H7.300V1.600L1 7l6.300 5.400V8.900h7.300z" fill="#f2c77e"/></svg>
<svg class="abs" style="left:1476px;top:1011px;" width="18" height="18" viewBox="0 0 18 18"><circle cx="7.300" cy="7.300" r="4.900" fill="none" stroke="#1b8ac0" stroke-width="2"/><path d="M10.900 10.900l4.600 4.600" stroke="#1b8ac0" stroke-width="2.600" fill="none"/></svg>
<span class="t" style="left:1507.00px;top:1015px;font-size:11.8px;color:#000;">2</span>
<svg class="abs" style="left:1526px;top:1013px;" width="16" height="14" viewBox="0 0 16 14"><path d="M1.400 5.100h7.300V1.600L15 7l-6.300 5.400V8.900H1.400z" fill="#f0a31f"/></svg>
<span class="t" style="left:1900.70px;top:1027px;font-size:11.5px;color:#000;letter-spacing:1.380px;">+/-</span>
</div>
<!-- sidebar -->
<div>
<div class="abs" style="left:0px;top:99px;width:213px;height:941px;background:#eeeeee;"></div>
<div class="abs" style="left:213px;top:99px;width:1px;height:941px;background:#0d760d;"></div>
<span class="t" style="left:11.30px;top:108px;font-size:12.5px;color:#363636;letter-spacing:0.137px;">Infoserwis</span>
<span class="t" style="left:11.30px;top:128px;font-size:12.5px;color:#363636;letter-spacing:-0.033px;">Wyszukiwarka</span>
<span class="t" style="left:11.40px;top:150px;font-size:11.7px;color:#0e8a0e;letter-spacing:-0.803px;-webkit-text-stroke:0.2px #0e8a0e;">KSIĘGI</span>
<span class="t" style="left:21.50px;top:169px;font-size:12.5px;color:#363636;letter-spacing:-0.910px;">KPiR</span>
<span class="t" style="left:21.50px;top:187px;font-size:12.5px;color:#363636;letter-spacing:0.265px;">Dekretacja dokumentów</span>
<span class="t" style="left:11.40px;top:209px;font-size:11.7px;color:#0e8a0e;letter-spacing:-0.490px;-webkit-text-stroke:0.2px #0e8a0e;">EWIDENCJE VAT</span>
<span class="t" style="left:21.50px;top:228px;font-size:12.5px;color:#363636;letter-spacing:0.062px;">Ewidencja VAT sprzedaży</span>
<span class="t" style="left:21.50px;top:246px;font-size:12.5px;color:#363636;">Ewidencja VAT zakupu</span>
<span class="t" style="left:11.40px;top:268px;font-size:11.7px;color:#0e8a0e;letter-spacing:-0.435px;-webkit-text-stroke:0.2px #0e8a0e;">KSIĘGI POMOCNICZE</span>
<span class="t" style="left:21.50px;top:287px;font-size:12.5px;color:#363636;letter-spacing:0.193px;">Wspólnicy</span>
<span class="t" style="left:21.50px;top:305px;font-size:12.5px;color:#363636;">Pojazdy</span>
<span class="t" style="left:21.50px;top:323px;font-size:12.5px;color:#363636;letter-spacing:-0.053px;">Remanenty</span>
<span class="t" style="left:21.50px;top:341px;font-size:12.5px;color:#363636;letter-spacing:0.221px;">Pozostałe dokumenty</span>
<span class="t" style="left:11.40px;top:363px;font-size:11.7px;color:#0e8a0e;letter-spacing:-0.334px;-webkit-text-stroke:0.2px #0e8a0e;">ŚRODKI TRWAŁE</span>
<span class="t" style="left:21.50px;top:382px;font-size:12.5px;color:#363636;letter-spacing:0.246px;">Środki trwałe</span>
<span class="t" style="left:21.50px;top:400px;font-size:12.5px;color:#363636;letter-spacing:0.127px;">Wyposażenie</span>
<span class="t" style="left:11.40px;top:422px;font-size:11.7px;color:#0e8a0e;letter-spacing:-0.313px;-webkit-text-stroke:0.2px #0e8a0e;">UMOWY I PŁACE</span>
<span class="t" style="left:21.50px;top:441px;font-size:12.5px;color:#363636;letter-spacing:0.199px;">Umowy pracownicze</span>
<span class="t" style="left:21.50px;top:459px;font-size:12.5px;color:#363636;letter-spacing:-0.517px;">Płace</span>
<span class="t" style="left:11.40px;top:481px;font-size:11.7px;color:#0e8a0e;letter-spacing:-0.352px;-webkit-text-stroke:0.2px #0e8a0e;">FINANSE</span>
<span class="t" style="left:21.50px;top:500px;font-size:12.5px;color:#363636;letter-spacing:-0.331px;">Kasa</span>
<span class="t" style="left:21.50px;top:518px;font-size:12.5px;color:#363636;letter-spacing:-0.564px;">Bank</span>
<span class="t" style="left:11.40px;top:540px;font-size:11.7px;color:#0e8a0e;letter-spacing:-0.376px;-webkit-text-stroke:0.2px #0e8a0e;">ROZLICZENIA</span>
<span class="t" style="left:21.50px;top:559px;font-size:12.5px;color:#363636;">Rozrachunki</span>
<span class="t" style="left:21.50px;top:577px;font-size:12.5px;color:#363636;letter-spacing:0.257px;">Kompensaty</span>
<span class="t" style="left:21.50px;top:595px;font-size:12.5px;color:#363636;letter-spacing:0.065px;">Windykacja</span>
<span class="t" style="left:21.50px;top:613px;font-size:12.5px;color:#363636;letter-spacing:0.119px;">Kursy walut</span>
<span class="t" style="left:11.40px;top:635px;font-size:11.7px;color:#0e8a0e;letter-spacing:-0.669px;-webkit-text-stroke:0.2px #0e8a0e;">DEKLARACJE I JPK</span>
<span class="t" style="left:21.50px;top:654px;font-size:12.5px;color:#363636;letter-spacing:0.064px;">Deklaracje skarbowe i JPK</span>
<span class="t" style="left:21.50px;top:672px;font-size:12.5px;color:#363636;letter-spacing:-0.145px;">Deklaracje ZUS i PPK</span>
<span class="t" style="left:11.40px;top:694px;font-size:11.7px;color:#0e8a0e;letter-spacing:-0.699px;-webkit-text-stroke:0.2px #0e8a0e;">KARTOTEKI</span>
<span class="t" style="left:21.50px;top:713px;font-size:12.5px;color:#363636;">Klienci</span>
<span class="t" style="left:21.50px;top:731px;font-size:12.5px;color:#363636;letter-spacing:-0.046px;">Pracownicy</span>
<span class="t" style="left:21.50px;top:749px;font-size:12.5px;color:#363636;letter-spacing:-0.067px;">Instytucje</span>
<span class="t" style="left:11.40px;top:771px;font-size:11.7px;color:#0e8a0e;letter-spacing:-0.191px;-webkit-text-stroke:0.2px #0e8a0e;">KOMUNIKACJA</span>
<span class="t" style="left:21.50px;top:790px;font-size:12.5px;color:#363636;letter-spacing:0.108px;">Portal Biura</span>
<span class="t" style="left:21.50px;top:808px;font-size:12.5px;color:#363636;letter-spacing:0.045px;">Poczta wychodząca</span>
<span class="t" style="left:21.50px;top:826px;font-size:12.5px;color:#363636;letter-spacing:0.197px;">Wiadomości SMS</span>
<span class="t" style="left:21.50px;top:844px;font-size:12.5px;color:#363636;letter-spacing:0.298px;">Wiadomości InsMail</span>
<span class="t" style="left:21.50px;top:862px;font-size:12.5px;color:#363636;letter-spacing:0.179px;">Portale i aplikacje</span>
<span class="t" style="left:11.40px;top:884px;font-size:11.7px;color:#0e8a0e;letter-spacing:-0.338px;-webkit-text-stroke:0.2px #0e8a0e;">EWIDENCJE DODATKOWE</span>
<span class="t" style="left:21.50px;top:903px;font-size:12.5px;color:#363636;letter-spacing:0.047px;">Ślad rewizyjny</span>
<span class="t" style="left:21.50px;top:921px;font-size:12.5px;color:#363636;letter-spacing:0.294px;">Ochrona danych osobowych</span>
<span class="t" style="left:21.50px;top:939px;font-size:12.5px;color:#363636;letter-spacing:0.105px;">Naklejki</span>
<span class="t" style="left:21.50px;top:957px;font-size:12.5px;color:#363636;letter-spacing:0.338px;">Raporty</span>
<span class="t" style="left:21.50px;top:975px;font-size:12.5px;color:#363636;letter-spacing:0.116px;">Biblioteka załączników</span>
<span class="t" style="left:21.50px;top:993px;font-size:12.5px;color:#363636;letter-spacing:0.386px;">Notes</span>
<span class="t" style="left:21.50px;top:1011px;font-size:12.5px;color:#363636;letter-spacing:0.246px;">Konfiguracja</span>
</div>
<!-- title bar, app bar, toolbar -->
<div>
<div class="abs" style="left:0px;top:0px;width:1920px;height:23px;background:#ffffff;"></div>
<div class="abs" style="left:2px;top:4px;width:16px;height:14px;background:#006e00;"></div>
<svg class="abs" style="left:2px;top:4px;" width="16" height="14" viewBox="0 0 16 14"><g fill="none" stroke="#fff" stroke-width="1.15"><path d="M3.4 10.6V3.6h2.3a1.9 1.9 0 0 1 0 3.8H3.4M5.6 7.4l2.1 3.2"/><circle cx="10.6" cy="8.3" r="1.9"/><path d="M12.7 6.2v4.5"/></g></svg>
<span class="t" style="left:23.60px;top:7px;font-size:11.8px;color:#000;letter-spacing:-0.116px;">PHU_Firma - Adam Kowalski - Rachmistrz nexo PRO</span>
<svg class="abs" style="left:1790px;top:0px;" width="120" height="23" viewBox="0 0 120 23"><g fill="none" stroke="#111" stroke-width="1"><path d="M9.5 10.5h10"/><path d="M54.5 7.5h7.5v7.5h-7.5zM56.5 7.5v-2h7.5v7.5h-2"/><path d="M100 5l10 10M110 5l-10 10" stroke-width="1.1"/></g></svg>
<div class="abs" style="left:0px;top:23px;width:1920px;height:38px;background:#006e00;"></div>
<div class="abs" style="left:0px;top:23px;width:47px;height:38px;background:#dfdfdf;"></div>
<svg class="abs" style="left:0px;top:23px;" width="47" height="38" viewBox="0 0 47 38"><g fill="none" stroke="#0a720a" stroke-width="2.9" stroke-linejoin="miter"><path d="M12.3 27V11.4h5.4a4.6 4.6 0 0 1 0 9.2h-5.4M17.6 20.6l5 6.4"/><circle cx="29.6" cy="21.6" r="4.4"/><path d="M34.8 16.2V27"/></g><g fill="none" stroke="#4f9f4f" stroke-width="0.95"><path d="M25.6 13.3V9.3h1.5a1.2 1.2 0 0 1 0 2.4h-1.5"/><path d="M30.4 13.3V9.3h1.5a1.15 1.15 0 0 1 0 2.3h-1.5M31.8 11.6l1.2 1.7"/><ellipse cx="37.2" cy="11.3" rx="2.1" ry="2.05"/></g></svg>
<svg class="abs" style="left:59.4px;top:31.2px;" width="21.6" height="21.6" viewBox="0 0 24 24"><path d="M12 3.9l2.55 5.6 6.05.7-4.5 4.15 1.2 6-5.3-3-5.3 3 1.2-6-4.5-4.15 6.05-.7z" fill="none" stroke="#eaf4e4" stroke-width="1.2" stroke-linejoin="miter"/></svg>
<svg class="abs" style="left:222px;top:30px;" width="28" height="24" viewBox="0 0 28 24"><path d="M24.3 11.5H4.6M11.8 3.8L4.3 11.5l7.5 7.7" fill="none" stroke="#e6f2de" stroke-width="1.1"/></svg>
<div class="abs" style="left:259px;top:23px;width:120px;height:38px;background:#e6e6e6;"></div>
<span class="t" style="left:269.40px;top:35px;font-size:13.6px;color:#000;letter-spacing:0.339px;-webkit-text-stroke:0.45px #000;">Dokumenty</span>
<svg class="abs" style="left:392px;top:30px;" width="24" height="24" viewBox="0 0 24 24"><path d="M3.8 11.5h16.4M12 3.3v16.4" fill="none" stroke="#cfe6c4" stroke-width="1.2"/></svg>
<svg class="abs" style="left:1557px;top:34px;" width="16" height="16" viewBox="0 0 16 16"><g fill="none" stroke="#e6f2de" stroke-width="1.3"><path d="M2.2 6.4h8.2v8.2H2.2z"/><path d="M5.2 6.2V2h8.6v8.4h-3.2"/></g><path d="M6.2 9h1.3v4.3H6.4V10l-.7.2z" fill="#e6f2de"/></svg>
<span class="t" style="left:1578.60px;top:35px;font-size:13.8px;color:#e6f2de;letter-spacing:-0.622px;">KPiR 2021</span>
<svg class="abs" style="left:1656px;top:34px;" width="16" height="16" viewBox="0 0 16 16"><g fill="none" stroke="#e6f2de"><path d="M1.5 2.3h12v11.8h-12z" stroke-width="1.2"/><path d="M1.5 3.6h12" stroke-width="2.6"/></g><g fill="#e6f2de"><path d="M3.4 6.6h1.4v1.3H3.4zM5.6 6.6h1.4v1.3H5.6zM7.9 6.6h1.4v1.3H7.9zM10.1 6.6h1.4v1.3h-1.4zM3.4 8.7h1.4V10H3.4zM5.6 8.5h3.8v3.6H5.6zM10.1 8.7h1.4V10h-1.4zM3.4 10.8h1.4v1.3H3.4zM10.1 10.8h1.4v1.3h-1.4z"/></g></svg>
<span class="t" style="left:1676.50px;top:35px;font-size:13.8px;color:#e6f2de;letter-spacing:0.412px;">25-02-2021</span>
<span class="t" style="left:1769.60px;top:35px;font-size:13.8px;color:#e6f2de;letter-spacing:-0.434px;">POMOC</span>
<svg class="abs" style="left:1842px;top:31px;" width="22" height="22" viewBox="0 0 22 22"><g fill="none" stroke="#e6f2de" stroke-width="1.15"><path d="M10.6 1.9c2.6 1.5 5.3 2.2 8.2 2.3 0 7.3-2.2 12.6-8.2 16.2C4.6 16.800 2.400 11.500 2.400 4.200c2.900-.1 5.600-.8 8.200-2.300z"/><path d="M6.6 10.700l2.900 2.900 5.300-5.600"/></g></svg>
<svg class="abs" style="left:1888px;top:34px;" width="20" height="16" viewBox="0 0 20 16"><path d="M.3 2.600h17.700M.3 8h17.700M.3 13.200h17.700" stroke="#cfe6c4" stroke-width="1.1" fill="none"/></svg>
<div class="abs" style="left:1900px;top:23px;width:20px;height:19.5px;background:#f4f4f4;"></div>
<span class="t" style="left:1905.60px;top:27px;font-size:13.0px;color:#000;font-weight:bold;">1</span>
<div class="abs" style="left:0px;top:61px;width:1920px;height:38px;background:#e6e6e6;"></div>
<div class="abs" style="left:0px;top:61px;width:213px;height:38px;background:#dfdfdf;"></div>
<span class="t" style="left:11.90px;top:75px;font-size:13.4px;color:#9b9b9b;letter-spacing:0.009px;font-style:italic;">Szukaj poleceń</span>
<svg class="abs" style="left:190px;top:74px;" width="14" height="14" viewBox="0 0 14 14"><g fill="#858585"><path d="M8.1 1.3l4.600 4.600-1.300.4-1.700 1.700.100 2.700-1 1-5.500-5.500 1-1 2.700.1 1.700-1.700z"/><path d="M4.800 8.500l.700.700-3.800 3.600z"/></g></svg>
<svg class="abs" style="left:220px;top:71px;" width="18" height="18" viewBox="0 0 18 18"><path d="M5.6 4.600A6 6 0 1 0 9 3.300" fill="none" stroke="#1e8bc3" stroke-width="1.5"/><path d="M2.600 2.300l4.900-.2-.6 4.600z" fill="#1e8bc3"/></svg>
<span class="t" style="left:244.60px;top:74px;font-size:12.2px;color:#000;letter-spacing:-0.198px;">Odśwież listę plików</span>
<svg class="abs" style="left:363px;top:72px;" width="18" height="18" viewBox="0 0 18 18"><g fill="none" stroke="#1e8bc3"><path d="M9.600 13.800H2.100V1.900h11.800v7.300" stroke-width="1.6"/><path d="M4.400 5h7.300M4.400 7.800h7.300M4.400 10.600h4.400" stroke-width="1.3"/><path d="M12.900 10.400v6.200M9.800 13.500H16" stroke-width="1.5"/></g></svg>
<span class="t" style="left:386.25px;top:74px;font-size:12.2px;color:#000;letter-spacing:-0.041px;">Wprowadź dokumenty</span>
<span class="t" style="left:519.40px;top:74px;font-size:12.2px;color:#000;letter-spacing:-0.358px;">Operacje</span>
<span class="t" style="left:579.50px;top:74px;font-size:12.2px;color:#000;letter-spacing:-0.375px;">Ustawienia</span>
<div class="abs" style="left:213px;top:61px;width:1px;height:38px;background:#0d760d;"></div>
<span class="t" style="left:1795.40px;top:72px;font-size:17.8px;color:#454545;-webkit-text-stroke:0.3px #454545;">?</span>
<svg class="abs" style="left:1823px;top:71px;" width="18" height="18" viewBox="0 0 18 18"><circle cx="9" cy="9" r="3.900" fill="none" stroke="#454545" stroke-width="1.7"/><path d="M13.40 9.00L16.00 9.00M12.11 12.11L13.95 13.95M9.00 13.40L9.00 16.00M5.89 12.11L4.05 13.95M4.60 9.00L2.00 9.00M5.89 5.89L4.05 4.05M9.00 4.60L9.00 2.00M12.11 5.89L13.95 4.05" stroke="#454545" stroke-width="2.100" fill="none"/></svg>
<svg class="abs" style="left:1858px;top:72px;" width="16" height="16" viewBox="0 0 16 16"><g fill="none" stroke="#454545" stroke-width="1.600"><path d="M1.800 6.300h8v8h-8z"/><path d="M5.300 6V2h8.600v8.600H10"/></g></svg>
<svg class="abs" style="left:1895px;top:73px;" width="14" height="14" viewBox="0 0 14 14"><path d="M1.500 1.500l11 11M12.500 1.500l-11 11" stroke="#454545" stroke-width="1.700" fill="none"/></svg>
</div>
<!-- taskbar -->
<div>
<div class="abs" style="left:0px;top:1040px;width:1920px;height:40px;background:#1c1c1c;"></div>
<svg class="abs" style="left:15px;top:1051px;" width="18" height="18" viewBox="0 0 18 18"><path d="M.8 3.300l6.700-1v6.300H.8zM8.400 2.200L17 .9v7.700H8.400zM.8 9.500h6.700v6.300l-6.700-1zM8.400 9.500H17v7.700l-8.600-1.300z" fill="#fff"/></svg>
<div class="abs" style="left:48px;top:1040px;width:344px;height:40px;background:#f1f1f1;border-top:1px solid #cfcfcf"></div>
<svg class="abs" style="left:59px;top:1051px;" width="18" height="18" viewBox="0 0 18 18"><circle cx="11" cy="6.800" r="5.200" fill="none" stroke="#222" stroke-width="1.300"/><path d="M7.300 10.600L1.300 16.700" stroke="#222" stroke-width="1.400" fill="none"/></svg>
<span class="t" style="left:88.30px;top:1054px;font-size:15.3px;color:#3c3c3c;letter-spacing:-0.387px;">Wpisz tu wyszukiwane słowa</span>
<svg class="abs" style="left:406px;top:1051px;" width="20" height="18" viewBox="0 0 20 18"><g fill="none" stroke="#fff" stroke-width="1.300"><path d="M2.600 5h9.800v7.600H2.600z"/><path d="M2.600 3.200V1.400h9.800v1.800M2.600 14.400v1.800h9.800v-1.800"/><path d="M15.800 1v2.800M15.800 8.600v7.800"/></g><path d="M14.600 4.600h2.600v2.600h-2.600z" fill="#fff"/></svg>
<div class="abs" style="left:786px;top:1040px;width:48.5px;height:40px;background:#4a4a4a;"></div>
<div class="abs" style="left:496.25px;top:1078px;width:39.5px;height:2px;background:#76b9ed;"></div>
<div class="abs" style="left:545px;top:1078px;width:40px;height:2px;background:#76b9ed;"></div>
<div class="abs" style="left:593.75px;top:1078px;width:40px;height:2px;background:#76b9ed;"></div>
<div class="abs" style="left:643px;top:1078px;width:40px;height:2px;background:#76b9ed;"></div>
<div class="abs" style="left:692px;top:1078px;width:40px;height:2px;background:#76b9ed;"></div>
<div class="abs" style="left:741.25px;top:1078px;width:39.25px;height:2px;background:#76b9ed;"></div>
<div class="abs" style="left:786px;top:1078px;width:48.5px;height:2px;background:#76b9ed;"></div>
<div class="abs" style="left:839.25px;top:1078px;width:39.5px;height:2px;background:#76b9ed;"></div>
<svg class="abs" style="left:454px;top:1047px;" width="26" height="26" viewBox="0 0 26 26"><defs><linearGradient id="rg" x1="0" y1="0" x2="0" y2="1"><stop offset="0" stop-color="#e54c1c"/><stop offset="1" stop-color="#c23a12"/></linearGradient></defs><circle cx="13" cy="12.700" r="11.200" fill="url(#rg)" stroke="#e9e2de" stroke-width="1.300"/><path d="M18 6.600l-5.200 4.300h5M8.200 18.700l5.200-4.300h-5" fill="none" stroke="#fff" stroke-width="1.700" stroke-linejoin="miter"/></svg>
<svg class="abs" style="left:503px;top:1046px;" width="28" height="28" viewBox="0 0 28 28"><circle cx="17.300" cy="6.400" r="3.600" fill="#5b62c9"/><circle cx="23.300" cy="8.200" r="2.400" fill="#5059c9"/><rect x="11" y="10" width="12.300" height="12.600" rx="2.300" fill="#6a70d6"/><rect x="20" y="11.200" width="6.800" height="9.500" rx="2.300" fill="#5059c9"/><rect x="1.300" y="7.400" width="13" height="13" rx="1.400" fill="#4650bd"/><path d="M4.800 10.600h6M7.800 10.600v7.300" stroke="#fff" stroke-width="1.700" fill="none"/><circle cx="20.800" cy="22" r="4.300" fill="#8bc34a" stroke="#eee" stroke-width=".9"/><path d="M18.700 22l1.600 1.600 2.700-3" stroke="#fff" stroke-width="1.200" fill="none"/></svg>
<svg class="abs" style="left:552px;top:1047px;" width="26" height="26" viewBox="0 0 26 26"><circle cx="13" cy="13.300" r="11.300" fill="#1f5fb8"/><path d="M3 9.500C6 3 15 .8 21 5.500c3 2.500 4 6.500 3 10-1-4-4-6-8-6.500-4-.500-8 .500-13 .500z" fill="#4aa3f0"/><path d="M5.300 11.300l9.600-1.300 5 3.600-2.300 7-9 1.300-4.600-4.600z" fill="#eef2f7"/><path d="M5.300 11.300l7 5.300 7.600-3" fill="none" stroke="#b9c3d0" stroke-width=".9"/></svg>
<svg class="abs" style="left:601px;top:1046px;" width="28" height="28" viewBox="0 0 28 28"><defs><linearGradient id="fg" x1="0.2" y1="0" x2="0.6" y2="1"><stop offset="0" stop-color="#ffc533"/><stop offset="0.55" stop-color="#ff7a1a"/><stop offset="1" stop-color="#f0286a"/></linearGradient></defs><path d="M14.800 1.400c1.400 1.600 1.600 3.200 3.600 5 2.900 2.600 5.200 5.600 5.200 9.800 0 5.800-4.600 10-10.300 10S3 22 3 16.200c0-3 .9-5.700 2.400-7.600.1 1.200.6 2.100 1.400 2.700C7.600 8 10 6.300 12 5.600c1.200-.5 2.300-2 2.800-4.200z" fill="url(#fg)"/><circle cx="13" cy="15.800" r="5" fill="#7a3fe0"/><path d="M8.300 13.700c1.600-1.300 3.600-1.700 5.500-1 1.300.5 2.200 1.500 2.700 2.700-1.100-.7-2.400-.8-3.500-.3-1.100.5-2.400.3-3.300-.4-.5-.3-1-.7-1.400-1z" fill="#ff9a2a"/><path d="M19 4.600c2.300 2.100 4.300 4.500 4.600 8.300-1-2.300-2.200-3.300-3.900-4.200.2-1.400 0-2.800-.7-4.100z" fill="#ffd84a"/></svg>
<svg class="abs" style="left:650px;top:1048px;" width="26" height="24" viewBox="0 0 26 24"><path d="M1.300 3.300h8l2 2.300H24v14.600H1.300z" fill="#e5a92a"/><path d="M1.300 7h22.700v13.300H1.300z" fill="#fbd15b"/><path d="M7.300 14.300h11v6H7.300z" fill="#3f8fe0"/><path d="M9.600 17h6.400v3.300H9.600z" fill="#fbd15b"/></svg>
<svg class="abs" style="left:699px;top:1047px;" width="26" height="26" viewBox="0 0 26 26"><path d="M2.600 2h13l4.300 4.300V24H2.600z" fill="#f4f4f4" stroke="#bdbdbd" stroke-width=".8"/><path d="M3.300 10.600h16v13H3.300z" fill="#8fd14f"/><path d="M6.300 5.600v6.600M8.300 7v4M10.300 9.300h4.600" stroke="#444" stroke-width="1.100" fill="none"/><path d="M21.600 1.600l2 1.300-8.300 13.600-2.600 1.300.3-2.800z" fill="#f0a22a" stroke="#9a5a12" stroke-width=".6"/></svg>
<svg class="abs" style="left:748px;top:1047px;" width="26" height="26" viewBox="0 0 26 26"><circle cx="12.800" cy="13" r="12" fill="#1ed760"/><g fill="none" stroke="#111" stroke-linecap="round"><path d="M5.600 9.300c4.600-1.400 10-1 14.300 1.300" stroke-width="2.300"/><path d="M6.300 13.300c4-1.100 8.300-.7 12 1.300" stroke-width="1.900"/><path d="M7 17c3.300-.8 6.600-.5 9.600 1.100" stroke-width="1.600"/></g></svg>
<div class="abs" style="left:797.5px;top:1049.3px;width:24.5px;height:20.7px;background:#006e00;"></div>
<svg class="abs" style="left:797.5px;top:1049.3px;" width="24.5" height="20.7" viewBox="0 0 24.5 20.7"><g fill="none" stroke="#fff" stroke-width="1.700"><path d="M5 15.300V5.300h3.300a2.700 2.700 0 0 1 0 5.400H5M8.300 10.700l3 4.600"/><circle cx="15.800" cy="12" r="2.900"/><path d="M19.300 8.600v6.800"/></g></svg>
<div class="abs" style="left:847px;top:1048px;width:24px;height:24px;background:#ee3e36;"></div>
<svg class="abs" style="left:847px;top:1048px;" width="24" height="24" viewBox="0 0 24 24"><g fill="none" stroke="#fff" stroke-width="2.300"><circle cx="13" cy="11.300" r="5.300"/><path d="M7.700 11.300v10.300"/></g><circle cx="13" cy="11.300" r="1.700" fill="#fff"/></svg>
<svg class="abs" style="left:1686px;top:1055px;" width="14" height="10" viewBox="0 0 14 10"><path d="M1 8.300L6.600 2.300l5.600 6" fill="none" stroke="#fff" stroke-width="1.300"/></svg>
<svg class="abs" style="left:1708px;top:1054px;" width="18" height="12" viewBox="0 0 18 12"><path d="M4 11.300h10.300a3 3 0 0 0 .6-5.900A4.600 4.600 0 0 0 6.300 4 3.300 3.300 0 0 0 2 7a2.300 2.300 0 0 0 2 4.300z" fill="#0f7bd3"/><path d="M1.700 8.900c.100 1.300 1 2.400 2.300 2.400h10.300a3 3 0 0 0 2.700-1.700l-7-3.600z" fill="#2ca3ee"/></svg>
<svg class="abs" style="left:1732px;top:1053px;" width="18" height="14" viewBox="0 0 18 14"><g fill="none" stroke="#fff" stroke-width="1.200"><path d="M5 4.600h10.600v6.600H5z"/><path d="M16.300 6.600v2.600"/><path d="M2.600 1v3M1 3h3.300M1.300 5.600h2.600v2.300H1.300z"/></g><path d="M6.300 6h4.600v4H6.300z" fill="#fff"/></svg>
<svg class="abs" style="left:1756px;top:1053px;" width="18" height="15" viewBox="0 0 18 15"><g fill="none" stroke="#fff" stroke-width="1.200"><path d="M3.600 1.600h13v8h-13z"/><path d="M10 9.600v3M6.600 13h7"/><path d="M1 4v5.300h3.300"/></g></svg>
<svg class="abs" style="left:1780px;top:1053px;" width="18" height="15" viewBox="0 0 18 15"><g fill="none" stroke="#fff" stroke-width="1.100"><path d="M1.600 5.600h2.600l3.300-3v10l-3.300-3H1.600z"/><path d="M9.600 5.300a3 3 0 0 1 0 4.600M11.600 3.600a5.600 5.600 0 0 1 0 8"/></g><path d="M14 2a8 8 0 0 1 0 11.300" fill="none" stroke="#8a8a8a" stroke-width="1"/></svg>
<span class="t" style="left:1820.60px;top:1045px;font-size:12.0px;color:#fff;letter-spacing:-0.933px;opacity:.99;">15:05</span>
<span class="t" style="left:1807.25px;top:1063px;font-size:12.0px;color:#fff;letter-spacing:-0.851px;opacity:.99;">25.02.2021</span>
<svg class="abs" style="left:1878px;top:1051px;" width="18" height="18" viewBox="0 0 18 18"><path d="M.8 1h16.400v11.600h-6.600l-3.400 3.600v-3.600H.8z" fill="#fff"/><path d="M3.600 4.300h10.800M3.600 6.900h10.800M3.600 9.500h7" stroke="#1c1c1c" stroke-width="1.100" fill="none"/><circle cx="14.600" cy="13.300" r="2.900" fill="#1c1c1c"/><circle cx="14.600" cy="13.300" r="2.100" fill="none" stroke="#fff" stroke-width="1"/><path d="M13.900 14.200l1.500-1.700" stroke="#fff" stroke-width="1" fill="none"/></svg>
<div class="abs" style="left:1915px;top:1040px;width:1px;height:40px;background:#6a6a6a;"></div>
</div>
</body>
</html>
